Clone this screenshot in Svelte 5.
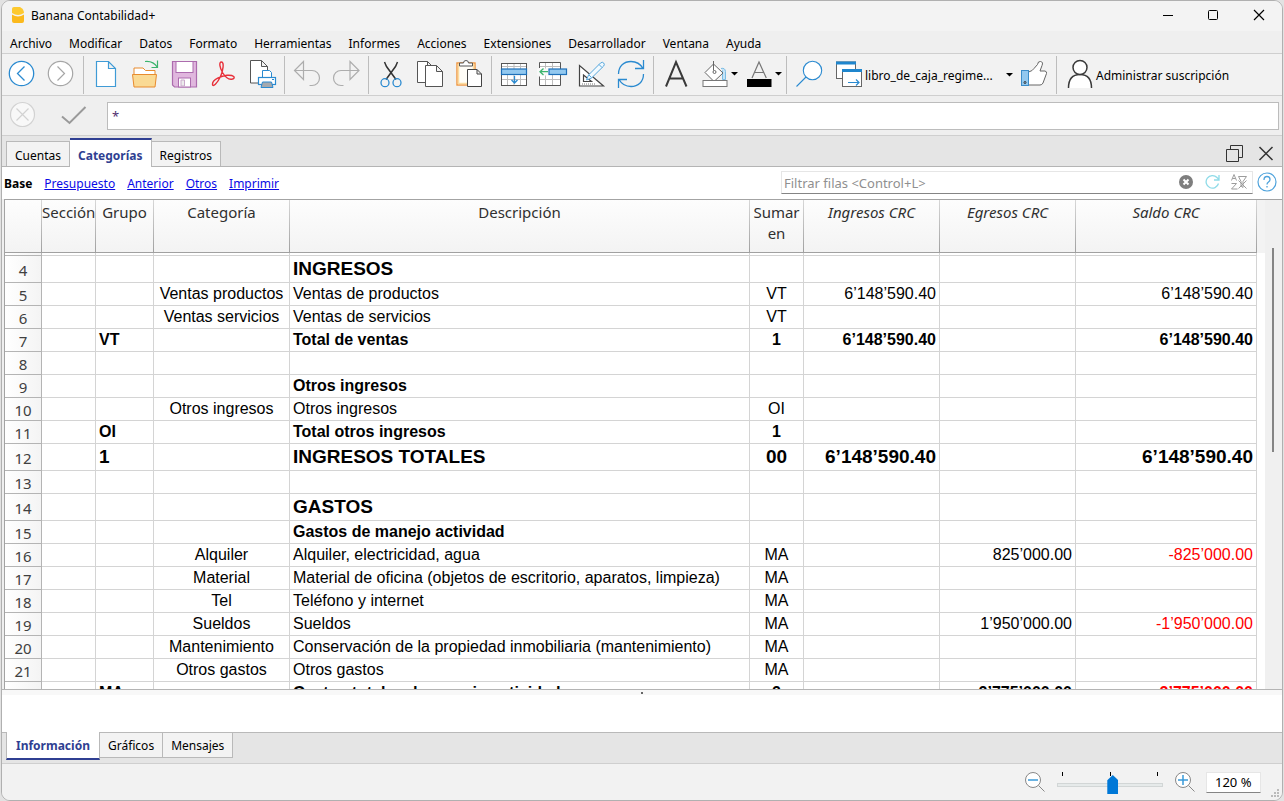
<script>
  const menus = ['Archivo', 'Modificar', 'Datos', 'Formato', 'Herramientas', 'Informes', 'Acciones', 'Extensiones', 'Desarrollador', 'Ventana', 'Ayuda'];
  const tabs = ['Cuentas', 'Categorías', 'Registros'];
  const views = ['Presupuesto', 'Anterior', 'Otros', 'Imprimir'];
  const panels = ['Información', 'Gráficos', 'Mensajes'];

  let tab = $state('Categorías');
  let panel = $state('Información');
  let formula = $state('*');
  let filter = $state('');
  let zoomLevel = $state(53);

  const rows = [
    { n: 4, style: 'title', desc: 'INGRESOS' },
    { n: 5, cat: 'Ventas productos', desc: 'Ventas de productos', sum: 'VT', inc: '6’148’590.40', bal: '6’148’590.40' },
    { n: 6, cat: 'Ventas servicios', desc: 'Ventas de servicios', sum: 'VT' },
    { n: 7, style: 'total', group: 'VT', desc: 'Total de ventas', sum: '1', inc: '6’148’590.40', bal: '6’148’590.40' },
    { n: 8 },
    { n: 9, style: 'total', desc: 'Otros ingresos' },
    { n: 10, cat: 'Otros ingresos', desc: 'Otros ingresos', sum: 'OI' },
    { n: 11, style: 'total', group: 'OI', desc: 'Total otros ingresos', sum: '1' },
    { n: 12, style: 'title', group: '1', desc: 'INGRESOS TOTALES', sum: '00', inc: '6’148’590.40', bal: '6’148’590.40' },
    { n: 13 },
    { n: 14, style: 'title', desc: 'GASTOS' },
    { n: 15, style: 'total', desc: 'Gastos de manejo actividad' },
    { n: 16, cat: 'Alquiler', desc: 'Alquiler, electricidad, agua', sum: 'MA', exp: '825’000.00', bal: '-825’000.00' },
    { n: 17, cat: 'Material', desc: 'Material de oficina (objetos de escritorio, aparatos, limpieza)', sum: 'MA' },
    { n: 18, cat: 'Tel', desc: 'Teléfono y internet', sum: 'MA' },
    { n: 19, cat: 'Sueldos', desc: 'Sueldos', sum: 'MA', exp: '1’950’000.00', bal: '-1’950’000.00' },
    { n: 20, cat: 'Mantenimiento', desc: 'Conservación de la propiedad inmobiliaria (mantenimiento)', sum: 'MA' },
    { n: 21, cat: 'Otros gastos', desc: 'Otros gastos', sum: 'MA' },
    { n: 22, style: 'total', group: 'MA', desc: 'Gastos totales de manejo actividad', sum: '2', exp: '2’775’000.00', bal: '-2’775’000.00' }
  ];
</script>

<div class="window">
  <header class="titlebar">
    <svg class="logo" width="14" height="18" viewBox="0 0 14 18" aria-hidden="true">
      <path d="M1 3q0-2 2-2h6q4 2 4 6-6 4-12 0z" fill="#fdc92f" />
      <path d="M1 8.500q6 4 12 0V15q0 2-2 2H3q-2 0-2-2z" fill="#fbb91c" />
    </svg>
    <span class="caption">Banana Contabilidad+</span>
    <div class="winbuttons">
      <button aria-label="Minimizar"><svg width="46" height="30" viewBox="0 0 46 30"><path d="M19 15.500h10" stroke="#000" /></svg></button>
      <button aria-label="Maximizar"><svg width="46" height="30" viewBox="0 0 46 30"><rect x="18.500" y="10.500" width="9" height="9" rx="1" fill="none" stroke="#000" /></svg></button>
      <button aria-label="Cerrar"><svg width="46" height="30" viewBox="0 0 46 30"><path d="M18 10l10 10M28 10l-10 10" stroke="#000" stroke-width="1.200" /></svg></button>
    </div>
  </header>

  <nav class="menubar">
    {#each menus as m}<button>{m}</button>{/each}
  </nav>

  <div class="toolbar">
    <button aria-label="Atrás">
      <svg width="39" height="41" viewBox="0 0 39 41"><g fill="none" stroke="#2a8ad0" stroke-width="1.300"><circle cx="19.500" cy="19.500" r="12.200" fill="#fff" /><path d="M22.500 12.500l-7 7 7 7" /></g></svg>
    </button>
    <button aria-label="Adelante">
      <svg width="39" height="41" viewBox="0 0 39 41"><g fill="none" stroke="#a6a6a6" stroke-width="1.200"><circle cx="19.500" cy="19.500" r="12.200" fill="#fff" /><path d="M16.500 12.500l7 7-7 7" /></g></svg>
    </button>
    <i class="sep"></i>
    <button aria-label="Nuevo">
      <svg width="39" height="41" viewBox="0 0 39 41"><path d="M10.500 7.500h12l7 7v18h-19zM22.500 7.500v7h7" fill="#fff" stroke="#3f9bd6" stroke-width="1.200" /></svg>
    </button>
    <button aria-label="Abrir">
      <svg width="39" height="41" viewBox="0 0 39 41">
        <path d="M9 20.500v-6.500h9l2.500 2.500h9.500v4" fill="#fff" stroke="#e88b2e" />
        <path d="M7.500 20.500h24l-1.500 12.500h-21z" fill="#fada94" stroke="#e88b2e" />
        <path d="M20 7.500q8-1 12.500 6M26.500 13.500h6v-7" fill="none" stroke="#3cb46e" stroke-width="1.200" />
      </svg>
    </button>
    <button aria-label="Guardar">
      <svg width="39" height="41" viewBox="0 0 39 41">
        <path d="M8.500 7.500h24v25.500h-22l-2-2z" fill="#e0b7de" stroke="#ac6cae" stroke-width="1.200" />
        <rect x="12" y="7.500" width="17" height="11" fill="#fff" stroke="#ac6cae" />
        <rect x="14.500" y="24" width="12" height="9" fill="#fff" stroke="#ac6cae" />
        <path d="M17 26h3.500v6h-3.500z" fill="#ececec" stroke="#c9a8ca" />
      </svg>
    </button>
    <button aria-label="PDF">
      <svg width="39" height="41" viewBox="0 0 39 41">
        <path d="M18.500 8c-3 0-1.500 6 1 10.500 2.500 4.200 6.500 7.500 10 6.500 3.500-1.200 1.500-4.200-5.500-3.700-5.500.5-14.500 4.200-14.500 8.700 0 4 5-1 8-7.500 2.500-5.500 4-14.500 1-14.500z" fill="none" stroke="#e8303a" stroke-width="1.400" />
      </svg>
    </button>
    <button aria-label="Vista previa de impresión">
      <svg width="39" height="41" viewBox="0 0 39 41">
        <path d="M8.500 6.500h11l6 6v16.500h-17zM19.500 6.500v6h6" fill="#fff" stroke="#555" />
        <path d="M20.500 23.500v-7h7l2 2v5" fill="#fff" stroke="#2a8ad0" />
        <rect x="16.500" y="23.500" width="17" height="7" fill="#fff" stroke="#2a8ad0" stroke-width="1.200" />
        <path d="M30 25.500h2" stroke="#2a8ad0" />
        <path d="M20.500 28h9l1.500 5.500h-12z" fill="#a5a9ae" stroke="#2a8ad0" />
      </svg>
    </button>
    <i class="sep"></i>
    <button aria-label="Deshacer">
      <svg width="39" height="41" viewBox="0 0 39 41"><path d="M16.500 7.500v18l-9-9zM7.500 16.500h17.500a7.500 7.500 0 0 1 0 15h-2.500" fill="none" stroke="#adadad" stroke-width="1.200" /></svg>
    </button>
    <button aria-label="Rehacer">
      <svg width="39" height="41" viewBox="0 0 39 41"><path d="M24 7.500v18l9-9zM33 16.500h-18a7.500 7.500 0 0 0 0 15h2.500" fill="none" stroke="#adadad" stroke-width="1.200" /></svg>
    </button>
    <i class="sep"></i>
    <button aria-label="Cortar">
      <svg width="39" height="41" viewBox="0 0 39 41">
        <path d="M13.500 8l2 4.500 9.500 13M26.500 8l-2 4.500-9.500 13" fill="none" stroke="#333" stroke-width="1.500" />
        <g fill="none" stroke="#2a8ad0" stroke-width="1.300"><circle cx="14" cy="28.700" r="4" /><circle cx="26" cy="28.700" r="4" /></g>
      </svg>
    </button>
    <button aria-label="Copiar">
      <svg width="39" height="41" viewBox="0 0 39 41"><g fill="#fff" stroke="#555"><path d="M7.500 7.500h10l4 4v17h-14zM17.500 7.500v4h4" /><path d="M15.500 11.500h11l6 6v15h-17zM26.500 11.500v6h6" /></g></svg>
    </button>
    <button aria-label="Pegar">
      <svg width="39" height="41" viewBox="0 0 39 41">
        <rect x="8" y="9" width="18" height="22" fill="#fffdf7" stroke="#f0953e" stroke-width="1.400" />
        <rect x="9.500" y="10.500" width="15" height="19" fill="none" stroke="#fbdca0" stroke-width="1.500" />
        <path d="M10.500 12V9h4q0-2.500 2.500-2.500t2.500 2.500h4v3z" fill="#fff" stroke="#555" />
        <path d="M18.500 15.500h9.500l4.500 4.500v12.500h-14zM28 15.500v4.500h4.500" fill="#fff" stroke="#444" />
      </svg>
    </button>
    <i class="sep"></i>
    <button aria-label="Añadir filas">
      <svg width="39" height="41" viewBox="0 0 39 41">
        <rect x="7.500" y="9.500" width="25" height="22" fill="#fff" />
        <path d="M7 12.500h26M7 25.500h26M13.500 10v21M20 10v21M26.500 10v21" stroke="#bdbdbd" />
        <rect x="7.500" y="9.500" width="25" height="22" fill="none" stroke="#555" />
        <rect x="7.500" y="15" width="25" height="5.500" fill="#92c8ef" stroke="#1d6fb8" stroke-width="1.200" />
        <path d="M20.500 22v7M17.500 26l3 3 3-3" fill="none" stroke="#2a8ad0" stroke-width="1.300" />
      </svg>
    </button>
    <button aria-label="Insertar filas">
      <svg width="39" height="41" viewBox="0 0 39 41">
        <rect x="6.500" y="9" width="21" height="22.500" fill="#fff" />
        <path d="M6 12.500h22M6 25.500h22M12.500 9v22M19.500 9v22" stroke="#bdbdbd" />
        <path d="M6.500 14v-5.500h21v23h-21v-9" fill="none" stroke="#555" />
        <path d="M4 14.500h12v7h-12z" fill="#f8f8f8" />
        <rect x="16" y="15" width="17.500" height="5.500" fill="#92c8ef" stroke="#1d6fb8" stroke-width="1.200" />
        <path d="M15 17.700h-8M10.500 14.500l-3.500 3.200 3.500 3.200" fill="none" stroke="#3cb46e" stroke-width="1.300" />
      </svg>
    </button>
    <button aria-label="Propiedades de la tabla">
      <svg width="39" height="41" viewBox="0 0 39 41">
        <path d="M7.500 11.500v20.500h24zM11.500 21v6.500h8z" fill="#fff" stroke="#444" stroke-width="1.200" />
        <path d="M10 30h14" stroke="#777" stroke-dasharray="1 1" />
        <path d="M14.500 26l2-5 12-12q2-1.500 3.200 0t0 3L19.500 24z" fill="#f2faff" stroke="#55a6dc" />
        <path d="M17 21l2.500 2.500M27 10.500l3 3" stroke="#55a6dc" />
      </svg>
    </button>
    <button aria-label="Recalcular">
      <svg width="39" height="41" viewBox="0 0 39 41"><g fill="none" stroke="#2a8ad0" stroke-width="1.300"><path d="M7.500 20c0-8 5.500-12.500 12.500-12.500q8 0 12 7M32.500 6v8.500h-8.500" /><path d="M32.500 20c0 8-5.500 12.500-12.500 12.500q-8 0-12-7M7.500 34v-8.500h8.500" /></g></svg>
    </button>
    <i class="sep"></i>
    <button aria-label="Fuente">
      <svg width="39" height="41" viewBox="0 0 39 41"><path d="M10 32.500l10-24.500 10.500 24.500M13.500 24.500h13" fill="none" stroke="#3a3a3a" stroke-width="2" /></svg>
    </button>
    <button aria-label="Color de fondo">
      <svg width="44" height="41" viewBox="0 0 44 41">
        <path d="M26 14.500q4-1 4.500 3v8h-3v-9" fill="#c5e4f7" stroke="#7bbce4" />
        <path d="M18.500 10l9.500 9-9 8.500-9-9z" fill="#fff" stroke="#666" />
        <path d="M18.500 7v9.500" stroke="#666" /><circle cx="19.500" cy="18" r="1.500" fill="none" stroke="#666" />
        <rect x="8" y="26.500" width="24" height="6" fill="#fff" stroke="#777" />
        <path d="M36 18h7l-3.500 3.500z" />
      </svg>
    </button>
    <button aria-label="Color del texto">
      <svg width="44" height="41" viewBox="0 0 44 41">
        <path d="M13 24l7-16 7.300 16M15.500 18.500h9.500" fill="none" stroke="#777" stroke-width="1.200" />
        <rect x="8" y="25" width="24.500" height="8" /><path d="M36 18h7l-3.500 3.500z" />
      </svg>
    </button>
    <i class="sep"></i>
    <button aria-label="Buscar">
      <svg width="39" height="41" viewBox="0 0 39 41"><g stroke="#2a8ad0" stroke-width="1.100"><circle cx="23.500" cy="16.500" r="9.200" fill="#fff" /><path d="M7.500 32.500l9.500-9.500" /></g></svg>
    </button>
    <button class="file">
      <svg width="37" height="41" viewBox="0 0 37 41">
        <g fill="#fff" stroke="#666"><rect x="8.500" y="8" width="19" height="16.500" /><rect x="14.500" y="15.500" width="19" height="17" /></g>
        <path d="M8 7.500h20v3h-20zM14 15h20v3h-20z" fill="#1f86cd" />
        <path d="M20 28.500h11M28 25.500l3 3-3 3" fill="none" stroke="#2a8ad0" stroke-width="1.200" />
      </svg>
      <span>libro_de_caja_regime...</span>
      <svg width="7" height="4" viewBox="0 0 7 4"><path d="M0 0h7l-3.500 3.500z" /></svg>
    </button>
    <button aria-label="Me gusta">
      <svg width="39" height="41" viewBox="0 0 39 41">
        <path d="M14.500 18q4-1 5.500-3.500l3.500-4q.5-3.500 3-3 3 .5 1.500 4l-2 5.500h5q2 .5 1.500 2.500l-3.500 9.500q-1 2-3 2h-11.500z" fill="#fff" stroke="#666" />
        <rect x="7.500" y="16.500" width="7" height="15" fill="#92c8ef" stroke="#3b8cc9" /><circle cx="11" cy="28.500" r="1" fill="none" stroke="#333" />
      </svg>
    </button>
    <i class="sep"></i>
    <button class="account">
      <svg width="37" height="41" viewBox="0 0 37 41"><g fill="#fff" stroke="#3a3a3a" stroke-width="1.500"><path d="M9.500 34q0-13.500 11.500-13.500t11.500 13.500" /><circle cx="21" cy="13.500" r="7" /></g></svg>
      <span>Administrar suscripción</span>
    </button>
  </div>

  <div class="formula">
    <button aria-label="Cancelar"><svg width="40" height="39" viewBox="0 0 40 39"><g fill="none" stroke="#d2d2d2" stroke-width="1.200"><circle cx="20.500" cy="18.500" r="12" fill="#f8f8f8" /><path d="M14.500 12.500l12 12M26.500 12.500l-12 12" /></g></svg></button>
    <button aria-label="Aceptar"><svg width="64" height="39" viewBox="0 0 64 39"><path d="M20 20.500l7.500 6.500 16-16" fill="none" stroke="#9a9a9a" stroke-width="2" /></svg></button>
    <input aria-label="Contenido de la celda" bind:value={formula} />
  </div>

  <div class="tabstrip">
    {#each tabs as t}<button class:active={tab === t} onclick={() => (tab = t)}>{t}</button>{/each}
    <div class="tabtools">
      <button aria-label="Separar ventana"><svg width="18" height="18" viewBox="0 0 18 18"><path d="M1.500 4.500h12v12h-12zM5.500 4.500v-4h12v12h-4" fill="none" stroke="#333" /></svg></button>
      <button aria-label="Cerrar tabla"><svg width="16" height="18" viewBox="0 0 16 18"><path d="M1.500 2l13 13M14.500 2l-13 13" stroke="#333" stroke-width="1.500" /></svg></button>
    </div>
  </div>

  <div class="views">
    <b>Base</b>
    {#each views as v}<a href="#{v}">{v}</a>{/each}
    <div class="filter">
      <input aria-label="Filtrar filas" placeholder="Filtrar filas &lt;Control+L&gt;" bind:value={filter} />
      <button aria-label="Borrar filtro"><svg width="16" height="16" viewBox="0 0 16 16"><circle cx="7" cy="8" r="7" fill="#7e7e7e" /><path d="M4.500 5.500l5 5M9.500 5.500l-5 5" stroke="#fff" stroke-width="2" /></svg></button>
      <button aria-label="Actualizar"><svg width="16" height="16" viewBox="0 0 16 16"><path d="M13.500 9.500a6.300 6.300 0 1 1-1.500-6l2 2M14 1v5h-5" fill="none" stroke="#8fdbe8" stroke-width="1.300" /></svg></button>
      <button aria-label="Ordenar y filtrar"><svg width="16" height="16" viewBox="0 0 16 16"><g fill="none" stroke="#9c9c9c"><path d="M.5 6.500l2.500-6 2.500 6M1.500 4.500h3M.5 9.500h5l-5 5.500h6M7.500 2.500h8l-3.500 5v6l-2-1.500v-4.500zM7.500 6.500l8 8M15.500 6.500l-8 8" /></g></svg></button>
    </div>
    <button class="help" aria-label="Ayuda"><svg width="20" height="20" viewBox="0 0 20 20"><circle cx="10" cy="10" r="9" fill="#fff" stroke="#4fa3dc" stroke-width="1.200" /><path d="M7 8q0-3.500 3-3.500t3 3q0 1.500-1.500 2.500t-1.500 2.500M10 14v1.500" fill="none" stroke="#4fa3dc" stroke-width="1.300" /></svg></button>
  </div>

  <main class="sheet">
    <div class="grid">
      <table>
        <colgroup><col class="c-num" /><col class="c-sec" /><col class="c-grp" /><col class="c-amt" /><col /><col class="c-sec" /><col class="c-amt" /><col class="c-amt" /><col class="c-bal" /></colgroup>
        <thead>
          <tr>
            <th aria-label="Fila"></th><th>Sección</th><th>Grupo</th><th>Categoría</th><th>Descripción</th><th>Sumar en</th>
            <th class="calc">Ingresos CRC</th><th class="calc">Egresos CRC</th><th class="calc">Saldo CRC</th>
          </tr>
        </thead>
        <tbody>
          <tr class="clipped" aria-hidden="true"><td class="rowhead"></td>{#each Array(8) as _}<td></td>{/each}</tr>
          {#each rows as r (r.n)}
            <tr class={r.style}>
              <th class="rowhead" scope="row">{r.n}</th>
              <td></td>
              <td>{r.group ?? ''}</td>
              <td class="mid">{r.cat ?? ''}</td>
              <td>{r.desc ?? ''}</td>
              <td class="mid">{r.sum ?? ''}</td>
              <td class="num">{r.inc ?? ''}</td>
              <td class="num">{r.exp ?? ''}</td>
              <td class="num" class:neg={r.bal?.startsWith('-')}>{r.bal ?? ''}</td>
            </tr>
          {/each}
        </tbody>
      </table>
    </div>
    <div class="headfill"></div>
    <div class="scrollbar"><i></i></div>
  </main>

  <div class="splitter"><i></i></div>
  <section class="info"></section>
  <div class="panelstrip">
    {#each panels as p}<button class:active={panel === p} onclick={() => (panel = p)}>{p}</button>{/each}
  </div>

  <footer class="status">
    <button aria-label="Reducir"><svg width="22" height="22" viewBox="0 0 22 22"><g stroke="#888"><circle cx="9" cy="9" r="7.500" fill="#fff" /><path d="M14.500 14.500l6 6" /></g><path d="M4 9h10" stroke="#3a9ad9" stroke-width="1.500" /></svg></button>
    <div class="zoom">
      <div class="ticks"><i></i><i></i><i></i></div>
      <input type="range" aria-label="Zoom" min="0" max="100" bind:value={zoomLevel} />
    </div>
    <button aria-label="Ampliar"><svg width="22" height="22" viewBox="0 0 22 22"><g stroke="#888"><circle cx="9" cy="9" r="7.500" fill="#fff" /><path d="M14.500 14.500l6 6" /></g><path d="M4 9h10M9 4v10" stroke="#3a9ad9" stroke-width="1.500" /></svg></button>
    <input class="percent" aria-label="Porcentaje de zoom" value="120 %" />
    <svg class="grip" width="9" height="9" viewBox="0 0 9 9" aria-hidden="true"><path d="M6 0h2v2h-2zM3 3h2v2h-2zM6 3h2v2h-2zM0 6h2v2h-2zM3 6h2v2h-2zM6 6h2v2h-2z" fill="#bbb" /></svg>
  </footer>
</div>

<style>
  :global(body) { background: #e2e2e2; overflow: hidden; }
  .window {
    box-sizing: border-box; height: 100vh; display: flex; flex-direction: column; overflow: hidden;
    margin: 0 1px; border: 1px solid #b0b0b0; border-radius: 9px; background: #efefef;
    font: 12px/18px "Noto Sans", "Open Sans", sans-serif; color: #000;
  }
  .window > * { flex: none; }
  button { border: 0; padding: 0; margin: 0; background: none; font: inherit; color: inherit; display: flex; align-items: center; }
  input { font: inherit; font-size: 13px; color: inherit; box-sizing: border-box; margin: 0; outline: none; }
  svg { display: block; flex: none; }

  .titlebar { display: flex; align-items: center; height: 30px; background: #f3f3f3; }
  .logo { margin: 0 6px 2px 9px; }
  .winbuttons { display: flex; margin: 0 0 2px auto; }

  .menubar { display: flex; align-items: center; gap: 17px; height: 18px; padding: 4px 0 0 8px; }

  .toolbar { display: flex; align-items: center; height: 41px; border: solid #cfcfcf; border-width: 1px 0; background: #f2f2f2; }
  .toolbar span { padding-top: 2px; }
  .sep { width: 1px; height: 38px; margin: 0 2px 0 3px; background: #bdbdbd; }
  .file { width: 186px; }
  .file span { width: 141px; text-align: left; }

  .formula { display: flex; align-items: center; height: 39px; border-bottom: 1px solid #cfcfcf; padding-right: 3px; }
  .formula input { flex: 1; min-width: 0; height: 28px; margin-left: 1px; padding: 0 4px; border: 1px solid #bcbcbc; background: #fff; color: #503070; }

  .tabstrip { display: flex; align-items: flex-end; height: 30px; padding-left: 4px; border-bottom: 1px solid #b4b4b4; background: #e5e5e5; }
  .tabstrip > button { height: 25px; padding: 4px 8px 0; border: 1px solid #b9b9b9; border-bottom: 0; background: #f3f3f3; }
  .tabstrip > button + button { border-left: 0; }
  .tabstrip > button.active { height: 29px; margin-bottom: -1px; border-top: 2px solid #2f3f92; background: #fff; color: #2f3f92; font-weight: 700; }
  .tabtools { display: flex; gap: 15px; margin: 0 8px 3px auto; }

  .views { display: flex; align-items: center; gap: 12px; height: 30px; padding: 2px 5px 0 2px; background: #fff; }
  .views a { color: #0a0ae6; }
  .filter { display: flex; align-items: center; gap: 10px; width: 472px; box-sizing: border-box; height: 23px; margin: 0 -8px 4px auto; padding-right: 5px; border: 1px solid #e6e6e6; border-bottom-color: #858585; background: #fff; }
  .filter input { flex: 1; min-width: 0; height: 20px; padding: 2px 2px 0; border: 0; background: none; }
  .filter input::placeholder { color: #8f8f8f; opacity: 1; }
  .help { margin-bottom: 4px; }

  .sheet { min-height: 0; display: flex; overflow: hidden; background: #fff; margin-left: 2px; border-top: 1px solid #a3a3a3; border-left: 1px solid #a3a3a3; }
  .window > .sheet { flex: 1 1 0; }
  .grid { flex: 1; min-width: 0; overflow: hidden; }
  .headfill { width: 8px; height: 53px; background: #f3f3f3; }
  .scrollbar { width: 17px; background: #f0f0f0; }
  .scrollbar i { display: block; width: 2px; height: 204px; margin: 48px 0 0 7px; background: #858585; }

  table { width: 100%; table-layout: fixed; border-collapse: separate; border-spacing: 0; font: 16px/21px "Liberation Sans", Arial, sans-serif; }
  .c-num { width: 37px; }
  .c-sec { width: 54px; }
  .c-grp { width: 58px; }
  .c-amt { width: 136px; }
  .c-bal { width: 181px; }
  th, td { box-sizing: border-box; padding: 0 3px 1px; border: solid #d4d4d4; border-width: 0 1px 1px 0; font-weight: inherit; text-align: left; white-space: nowrap; overflow: hidden; }
  thead th { height: 53px; padding: 2px 0 0; vertical-align: top; text-align: center; white-space: normal; font: 15px/21px "Noto Sans", "Open Sans", sans-serif; color: #303030; background: linear-gradient(#fdfdfd, #f3f3f3); border-color: #a8a8a8; border-image: linear-gradient(#d8d8d8, #a0a0a0) 1; }
  thead th.calc { font-style: italic; }
  tbody tr { height: 23px; }
  tbody tr.title { height: 27px; font-size: 19px; font-weight: 700; }
  tbody tr.total { font-weight: 700; }
  tbody tr.clipped, tbody tr.clipped td { height: 3px; padding: 0; line-height: 0; }
  .rowhead { padding: 2px 0 0; line-height: 20px; text-align: center; font-family: "Noto Sans", "Open Sans", sans-serif; font-size: 15px; font-weight: 400; color: #404040; background: linear-gradient(90deg, #fff, #f4f4f4); border-color: #b4b4b4; }
  .mid { text-align: center; }
  .num { text-align: right; }
  .neg { color: #f00; }

  .splitter { display: flex; justify-content: center; height: 5px; border-top: 1px solid #b4b4b4; background: #f8f8f8; }
  .splitter i { width: 2px; height: 2px; margin-top: 2px; background: #666; }
  .info { height: 37px; background: #fff; border-bottom: 1px solid #b9b9b9; }

  .panelstrip { display: flex; align-items: flex-start; height: 30px; padding-left: 4px; background: #e5e5e5; border-bottom: 1px solid #cfcfcf; }
  .panelstrip button { height: 25px; padding: 2px 8px 0; border: 1px solid #b9b9b9; border-top: 0; border-left: 0; background: #f3f3f3; }
  .panelstrip button.active { height: 28px; margin-top: -1px; padding: 2px 9px 0; border-left: 1px solid #b9b9b9; border-bottom: 2px solid #2f3f92; background: #fff; color: #2f3f92; font-weight: 700; }

  .status { display: flex; align-items: center; justify-content: flex-end; height: 36px; background: #f2f2f2; }
  .zoom { width: 106px; margin: 0 11px; padding-top: 2px; }
  .ticks { display: flex; justify-content: space-between; height: 4px; padding: 0 5px; }
  .ticks i { width: 1px; background: #000; }
  .zoom input { display: block; appearance: none; width: 100%; height: 19px; background: none; }
  .zoom input::-webkit-slider-runnable-track { height: 4px; box-sizing: border-box; border: 1px solid #d2d6d6; background: #e6eaea; }
  .zoom input::-webkit-slider-thumb { appearance: none; width: 11px; height: 19px; margin-top: -9px; background: #0078d7; clip-path: polygon(50% 0, 100% 28%, 100% 100%, 0 100%, 0 28%); }
  .percent { width: 55px; height: 21px; margin: 0 10px; padding: 0 0 0 8px; border: 1px solid #e6e6e6; border-bottom-color: #858585; background: #fff; }
  .grip { align-self: flex-end; margin: 0 2px 2px 0; }
</style>
